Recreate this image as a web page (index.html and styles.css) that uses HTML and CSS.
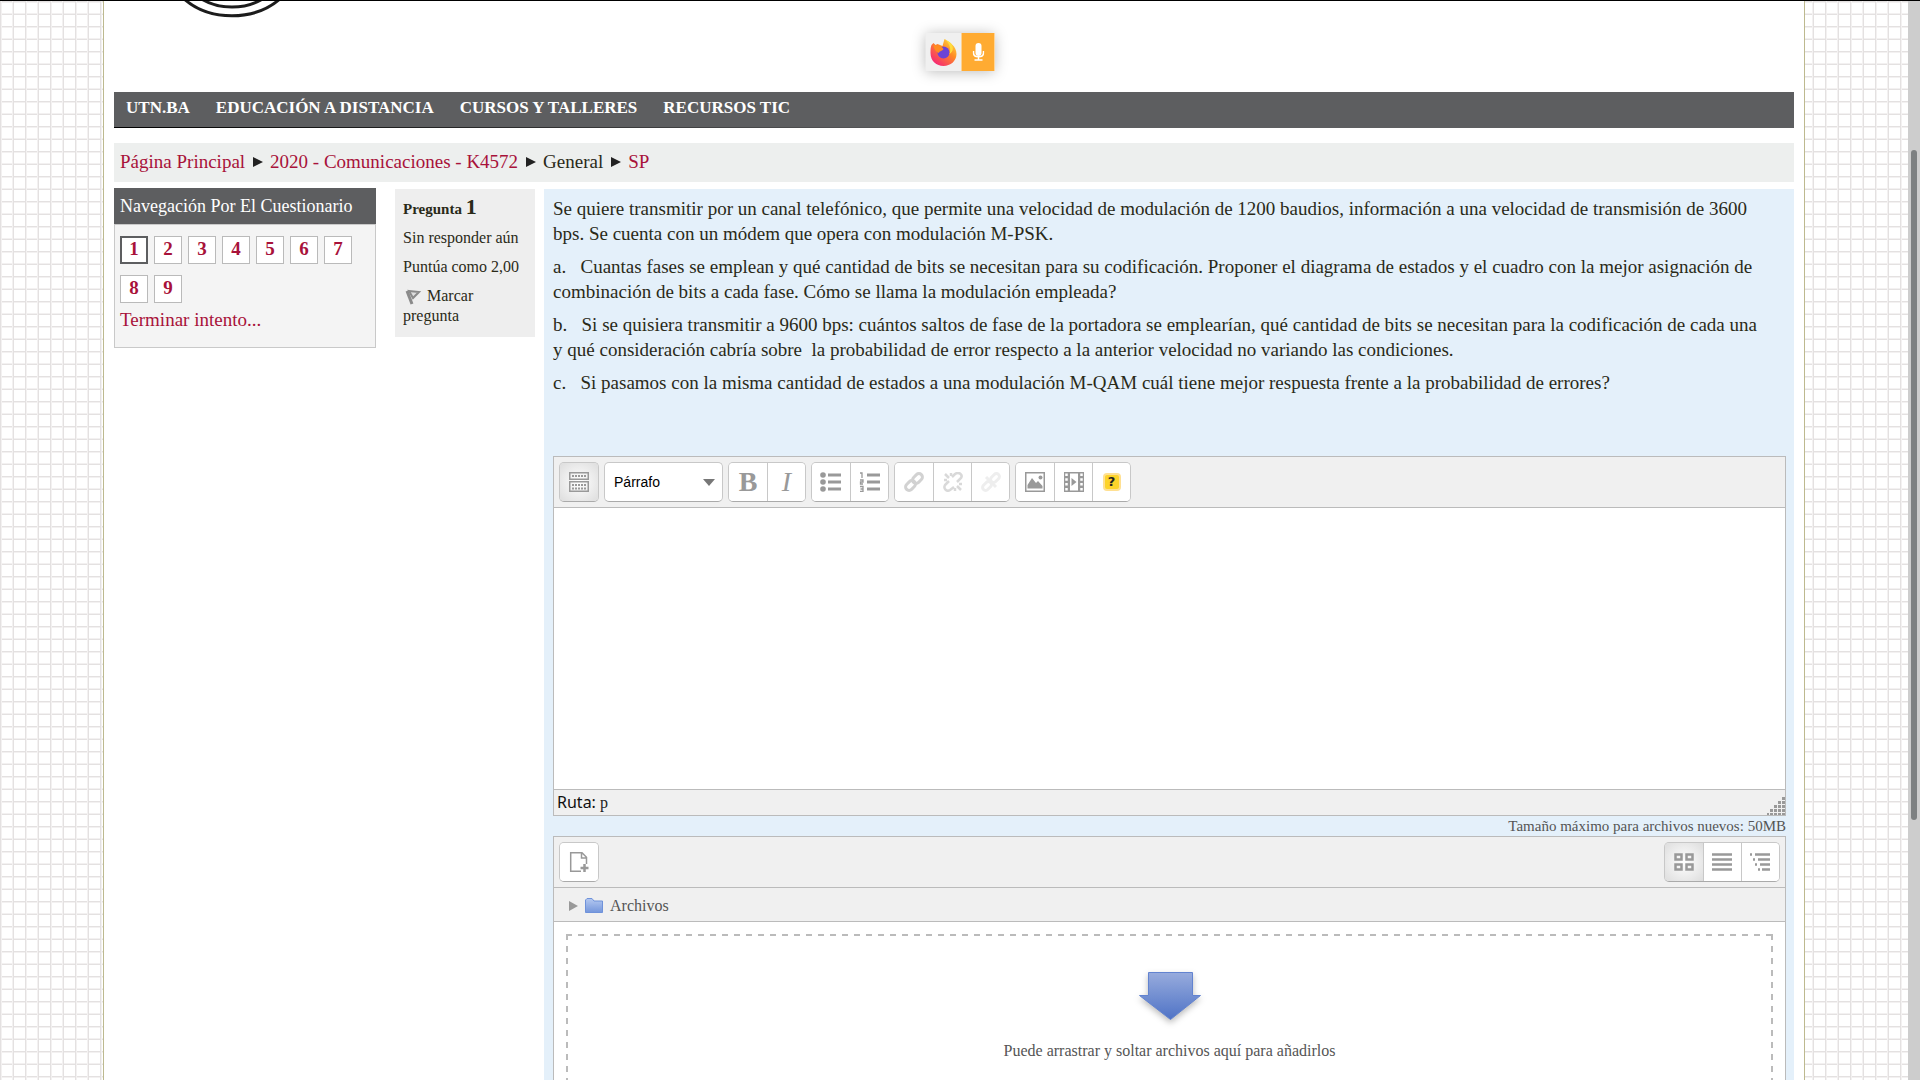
FILE: index.html
```html
<!DOCTYPE html>
<html lang="es">
<head>
<meta charset="utf-8">
<title>2020 - Comunicaciones - K4572: SP</title>
<link rel="stylesheet" href="styles.css">
</head>
<body>
<div class="window">
<div class="viewport">
<div class="page">
  <header class="masthead">
    <svg class="seal" width="116" height="18" viewBox="0 0 116 18" fill="none" stroke="#1c1c1c"><path d="M8 -4C34 21 82 21 108 -4" stroke-width="3"/><path d="M26 -3C44 9 72 9 90 -3" stroke-width="3"/></svg>
  </header>
  <nav class="menubar">
    <a href="#">UTN.BA</a><a href="#">EDUCACIÓN A DISTANCIA</a><a href="#">CURSOS Y TALLERES</a><a href="#">RECURSOS TIC</a>
  </nav>
  <nav class="breadcrumb">
    <a href="#">Página Principal</a><i class="sep"></i><a href="#">2020 - Comunicaciones - K4572</a><i class="sep"></i><span>General</span><i class="sep"></i><a href="#">SP</a>
  </nav>
  <div class="columns">
    <aside class="block">
      <h2>Navegación Por El Cuestionario</h2>
      <div class="block-body">
        <div class="numbers">
          <a class="current" href="#">1</a><a href="#">2</a><a href="#">3</a><a href="#">4</a><a href="#">5</a><a href="#">6</a><a href="#">7</a><a href="#">8</a><a href="#">9</a>
        </div>
        <a class="finish" href="#">Terminar intento...</a>
      </div>
    </aside>
    <section class="info">
      <h3>Pregunta <b>1</b></h3>
      <p>Sin responder aún</p>
      <p>Puntúa como 2,00</p>
      <p><svg class="flag" width="20" height="16" viewBox="0 0 20 16" fill="none"><path d="M4 2L9 15" stroke="#8a8a8a" stroke-width="3"/><path d="M6 2L16 3L10 9Z" fill="#ddd" stroke="#8a8a8a" stroke-width="2"/></svg> Marcar pregunta</p>
    </section>
    <main class="question">
      <div class="qtext">
        <p>Se quiere transmitir por un canal telefónico, que permite una velocidad de modulación de 1200 baudios, información a una velocidad de transmisión de 3600 bps. Se cuenta con un módem que opera con modulación M-PSK.</p>
        <p>a.&nbsp;&nbsp; Cuantas fases se emplean y qué cantidad de bits se necesitan para su codificación. Proponer el diagrama de estados y el cuadro con la mejor asignación de combinación de bits a cada fase. Cómo se llama la modulación empleada?</p>
        <p>b.&nbsp;&nbsp; Si se quisiera transmitir a 9600 bps: cuántos saltos de fase de la portadora se emplearían, qué cantidad de bits se necesitan para la codificación de cada una y qué consideración cabría sobre&nbsp; la probabilidad de error respecto a la anterior velocidad no variando las condiciones.</p>
        <p>c.&nbsp;&nbsp; Si pasamos con la misma cantidad de estados a una modulación M-QAM cuál tiene mejor respuesta frente a la probabilidad de errores?</p>
      </div>
      <div class="editor">
        <div class="toolbar">
          <div class="group">
            <button class="on" type="button" aria-label="Mostrar más botones"><svg width="20" height="20" viewBox="0 0 20 20" fill="none" stroke="#999"><path d="M.75.75h18.500v6.500H.75zM.75 9.750h18.500v9.500H.75z" stroke-width="1.500"/><path d="M3 4h14" stroke-width="2" stroke-dasharray="2 1"/><path d="M3 13h14M3 16.500h14" stroke-width="2" stroke-dasharray="2 1"/></svg></button>
          </div>
          <label class="format"><select aria-label="Formato"><option>Párrafo</option></select><svg width="12" height="7" viewBox="0 0 12 7"><path d="M0 0h12L6 7z" fill="#777"/></svg></label>
          <div class="group">
            <button class="letter" type="button"><b>B</b></button>
            <button class="letter" type="button"><em>I</em></button>
          </div>
          <div class="group">
            <button type="button" aria-label="Lista"><svg width="22" height="20" viewBox="0 0 22 20" fill="#999"><circle cx="3" cy="3" r="2.800"/><circle cx="3" cy="10" r="2.800"/><circle cx="3" cy="17" r="2.800"/><path d="M8 1.500h13v3H8zM8 8.500h13v3H8zM8 15.500h13v3H8z"/></svg></button>
            <button type="button" aria-label="Lista numerada"><svg width="22" height="20" viewBox="0 0 22 20" fill="none" stroke="#999"><path d="M8 3h13M8 10h13M8 17h13" stroke-width="3"/><path d="M1 1h2v5M1 8h3v2H1.500v2H4M1 14.500h3v5H1M1.500 17H4" stroke-width="1.300"/></svg></button>
          </div>
          <div class="group">
            <button type="button" aria-label="Enlace" disabled><svg width="20" height="20" viewBox="0 0 20 20" fill="none" stroke="#d2d2d2" stroke-width="3"><rect x="-5.500" y="-3.500" width="11" height="7" rx="3.500" transform="translate(13.500 6.500) rotate(-45)"/><rect x="-5.500" y="-3.500" width="11" height="7" rx="3.500" transform="translate(6.500 13.500) rotate(-45)"/></svg></button>
            <button type="button" aria-label="Quitar enlace" disabled><svg width="20" height="20" viewBox="0 0 20 20" fill="none" stroke="#d9d9d9" stroke-width="2.500"><path d="M9 5l3-3c4-3 8 1 6 4l-4 4M6 9l-4 4c-2 4 2 7 5 5l4-3M2 2l4 4M8 1v3M1 8h3M14 14l4 4M12 16v3M16 12h3"/></svg></button>
            <button type="button" aria-label="Evitar enlace automático" disabled><svg width="20" height="20" viewBox="0 0 20 20" fill="none" stroke="#eee" stroke-width="3"><rect x="-5" y="-3" width="10" height="6" rx="3" transform="translate(14 6) rotate(-45)"/><rect x="-5" y="-3" width="10" height="6" rx="3" transform="translate(6 14) rotate(-45)"/><path d="M5 5l10 10"/></svg></button>
          </div>
          <div class="group">
            <button type="button" aria-label="Imagen"><svg width="20" height="20" viewBox="0 0 20 20"><path d="M.75.75h18.500v18.500H.75z" fill="none" stroke="#999" stroke-width="1.500"/><path d="M2.500 16.500V13L7 6l4 5 2-2 4.500 5v2.500z" fill="#999"/><circle cx="15.500" cy="5.500" r="2" fill="#999"/></svg></button>
            <button type="button" aria-label="Multimedia"><svg width="20" height="20" viewBox="0 0 20 20"><path d="M0 0h20v20H0z" fill="#999"/><path d="M6 1.500h8v17H6z" fill="#fff"/><path d="M2.500 1.500v17M17.500 1.500v17" stroke="#fff" stroke-width="2.500" stroke-dasharray="2.500 2.300"/><path d="M7.500 6v8l5-4z" fill="#999"/></svg></button>
            <button class="help" type="button"><span>?</span></button>
          </div>
        </div>
        <textarea aria-label="Respuesta"></textarea>
        <div class="status"><span>Ruta: <a href="#">p</a></span>
          <svg width="18" height="18" viewBox="0 0 18 18" stroke="#999" stroke-width="3" stroke-dasharray="3 1"><path d="M18 1.500h-3M18 5.500h-7M18 9.500H7M18 13.500H3M18 17.500H0"/></svg>
        </div>
      </div>
      <p class="maxsize">Tamaño máximo para archivos nuevos: 50MB</p>
      <div class="files">
        <div class="toolbar">
          <div class="group">
            <button type="button" aria-label="Agregar"><svg width="20" height="20" viewBox="0 0 20 20" fill="none" stroke="#999" stroke-width="1.500"><path d="M12 19.200H1.700V.8H13l4.500 4.500V12M12.500 1v5h5"/><path d="M15.500 12v8M11.500 16h8" stroke-width="2.500"/></svg></button>
          </div>
          <div class="group views">
            <button class="on" type="button" aria-label="Iconos"><svg width="20" height="18" viewBox="0 0 20 18" fill="none" stroke="#999" stroke-width="2.500"><path d="M1.500 1.500h6v5h-6zM12.500 1.500h6v5h-6zM1.500 11.500h6v5h-6zM12.500 11.500h6v5h-6z"/></svg></button>
            <button type="button" aria-label="Lista"><svg width="20" height="18" viewBox="0 0 20 18" stroke="#999" stroke-width="2.500"><path d="M0 1.500h20M0 6.500h20M0 11.500h20M0 16.500h20"/></svg></button>
            <button type="button" aria-label="Árbol"><svg width="20" height="18" viewBox="0 0 20 18" stroke="#999" stroke-width="2.500"><path d="M0 1.500h2M5 1.500h15M3 6.500h2M8 6.500h12M5 11.500h2M10 11.500h10M8 16.500h2M12 16.500h8"/></svg></button>
          </div>
        </div>
        <div class="path">
          <svg width="9" height="10" viewBox="0 0 9 10"><path d="M0 0l9 5-9 5z" fill="#999"/></svg>
          <svg width="18" height="15" viewBox="0 0 18 15"><defs><linearGradient id="f" x2="0" y2="1"><stop stop-color="#b5c9f0"/><stop offset="1" stop-color="#7496dc"/></linearGradient></defs><path d="M.5 2L2 .5h5L9 3h8.500v11.500H.5z" fill="url(#f)" stroke="#6f92da"/></svg>
          <a href="#">Archivos</a>
        </div>
        <div class="drop">
          <svg width="72" height="60" viewBox="0 0 72 60"><defs><linearGradient id="a" x2="0" y2="1"><stop stop-color="#97abdd"/><stop offset="1" stop-color="#4f73c6"/></linearGradient></defs><path d="M14.500 4.500h44v23h8L36.500 51.500 5.500 27.500h9z" fill="url(#a)" stroke="#6283d0"/></svg>
          <p>Puede arrastrar y soltar archivos aquí para añadirlos</p>
        </div>
      </div>
    </main>
  </div>
</div>
</div>
<div class="scrollbar"><i></i></div>
</div>
<div class="sharing">
  <span class="fox"><svg width="28" height="28" viewBox="0 0 28 28"><defs><linearGradient id="x" x1="1" x2=".2" y2="1"><stop stop-color="#fff04a"/><stop offset=".45" stop-color="#ff8a24"/><stop offset="1" stop-color="#f5207c"/></linearGradient></defs><path d="M2 7l2-2 2 2 2-1 5 2 2-7c5 3 12 7 12 15C27 23 21 28 14 28S1 23 1 15C1 12 1 9 2 7z" fill="url(#x)"/><circle cx="14" cy="14.500" r="6" fill="#6c44d6"/><path d="M4 7c4 0 8 1 10 4-1 2-4 2-5 4-2-1-5-4-5-8z" fill="#ff8b20"/><path d="M15 1c5 4 7 10 5 15 4-2 5-8 0-12z" fill="#ffdc3d"/></svg></span>
  <span class="mic"><svg width="12" height="18" viewBox="0 0 12 18"><rect x="3" width="6" height="13" rx="3" fill="#fff"/><path d="M1 8v2c0 5 10 5 10 0V8M6 13v4M2 17h8" fill="none" stroke="#fff" stroke-width="1.500"/></svg></span>
</div>
</body>
</html>
```
FILE: styles.css
```css
* { box-sizing: border-box; }
body {
  margin: 0;
  color: #2a2a18;
  font: 19px/25px "Liberation Serif", serif;
}
h2, h3, p { margin: 0; }
a { color: #a8123a; text-decoration: none; }
svg { flex: none; }

.window {
  display: grid;
  grid-template-columns: 1fr 12px;
  height: 100vh;
  overflow: hidden;
  border-top: 1px solid #000;
}
.viewport {
  min-width: 0;
  overflow: hidden;
  background:
    linear-gradient(90deg, #e4e1e1 1px, #f3f1f1 1px 2px, transparent 2px 12px, #f3f1f1 12px 13px, #e4e1e1 13px 14px, transparent 14px) 0 0 / 25px 25px,
    linear-gradient(#e4e1e1 1px, #f3f1f1 1px 2px, transparent 2px 12px, #f3f1f1 12px 13px, #e4e1e1 13px 14px, transparent 14px) 0 0 / 25px 25px,
    #fff;
}
.scrollbar { background: #cdcdcd; padding: 149px 3px 0; }
.scrollbar i { display: block; height: 62vh; border-radius: 3px; background: #7e8182; }

.page {
  min-height: 100%;
  margin: 0 5.4%;
  padding: 0 10px;
  border: solid #bdb98f;
  border-width: 0 1px;
  background: #fff;
}
.masthead { height: 91px; padding-left: 60px; }
.seal { display: block; }

.menubar {
  display: flex;
  gap: 26px;
  height: 36px;
  padding: 0 12px;
  background: linear-gradient(90deg, #000, #5d5e60 50%) bottom / 100% 1px no-repeat, #5d5e60;
  font-size: 17px;
  font-weight: bold;
  line-height: 32px;
}
.menubar a { color: #fff; }
.breadcrumb {
  display: flex;
  align-items: center;
  margin: 15px 0 6px;
  padding: 6px 6px 8px;
  background: #edefee;
}
.sep {
  width: 10px;
  margin: 0 7px 0 8px;
  border: solid transparent;
  border-width: 5px 0 5px 10px;
  border-left-color: #222;
}

.columns { display: flex; align-items: flex-start; }
.block { flex: none; width: 262px; margin-right: 19px; }
.block h2 {
  padding-left: 6px;
  background: #5d5e60;
  color: #fff;
  font-size: 18px;
  font-weight: normal;
  line-height: 36px;
}
.block-body {
  padding: 11px 5px 15px;
  border: 1px solid #c9c9c9;
  background: #f4f4f4;
}
.numbers { display: flex; flex-wrap: wrap; gap: 11px 6px; margin-bottom: 4px; }
.numbers a {
  width: 28px;
  height: 28px;
  border: 1px solid #bababa;
  background: #fff;
  font-weight: bold;
  line-height: 24px;
  text-align: center;
}
.numbers .current { border: 2px solid #5d5e60; line-height: 22px; }
.finish { display: block; }

.info {
  flex: none;
  width: 140px;
  margin: 1px 9px 0 0;
  padding: 8px 8px 11px;
  background: #eee;
  font-size: 16px;
  line-height: 20px;
}
.info h3 { font-size: 15px; line-height: 20px; }
.info b { font-size: 22px; }
.info p { margin-top: 9px; }
.flag { vertical-align: -4px; }

.question {
  flex: 1;
  min-width: 0;
  margin-top: 1px;
  padding: 7px 8px 7px 9px;
  background: #e4f0fa;
}
.qtext { display: grid; gap: 8px; padding-right: 16px; margin-bottom: 61px; }

.editor, .files { border: 1px solid #bbb; background: #fff; }
.toolbar {
  display: flex;
  gap: 5px;
  padding: 5px;
  border-bottom: 1px solid #bbb;
  background: #f0f0f0;
}
.group {
  display: flex;
  overflow: hidden;
  border: 1px solid #c8c8c8;
  border-bottom-color: #aaa;
  border-radius: 5px;
}
.views { margin-left: auto; }
button {
  display: flex;
  align-items: center;
  justify-content: center;
  width: 38px;
  height: 38px;
  padding: 0;
  border: 0;
  background: #fff;
  color: #999;
}
button + button { border-left: 1px solid #c8c8c8; }
button.on { background: radial-gradient(#fff, #ddd); }
.letter { font: 28px/38px "Liberation Serif", serif; }
.help span {
  width: 18px;
  border: 2px solid #ffe092;
  border-radius: 4px;
  background: #fdd32a;
  color: #222;
  font: bold 13px/14px "DejaVu Sans", sans-serif;
}
.format { position: relative; width: 119px; }
.format select {
  width: 100%;
  height: 40px;
  padding: 0 9px;
  appearance: none;
  border: 1px solid #c8c8c8;
  border-bottom-color: #aaa;
  border-radius: 5px;
  background: #fff;
  color: #000;
  font: 14px "Liberation Sans", sans-serif;
}
.format svg { position: absolute; right: 8px; top: 17px; }
textarea {
  display: block;
  width: 100%;
  height: 281px;
  border: 0;
  resize: none;
}
.status {
  display: flex;
  align-items: flex-end;
  justify-content: space-between;
  padding-left: 3px;
  border-top: 1px solid #bbb;
  background: #f0f0f0;
  color: #111;
  font: 16px/25px "Noto Sans", sans-serif;
}
.status a { color: #222; font-family: "Liberation Serif", serif; }
.maxsize { color: #555; font-size: 15px; line-height: 20px; text-align: right; }
.path {
  display: flex;
  align-items: center;
  gap: 7px;
  height: 34px;
  padding: 2px 0 0 15px;
  border-bottom: 1px solid #bbb;
  background: #f0f0f0;
}
.path a { color: #555; font-size: 16px; }
.drop {
  --h: repeating-linear-gradient(90deg, #bbb 0 6px, transparent 6px 12px);
  --v: repeating-linear-gradient(#bbb 0 6px, transparent 6px 12px);
  display: flex;
  flex-direction: column;
  align-items: center;
  gap: 10px;
  height: 300px;
  margin: 12px;
  padding-top: 34px;
  background:
    var(--h) top / 100% 2px no-repeat,
    var(--h) bottom / 100% 2px no-repeat,
    var(--v) left / 2px 100% no-repeat,
    var(--v) right / 2px 100% no-repeat;
  color: #555;
  font-size: 16px;
}
.drop svg { filter: drop-shadow(0 3px 3px #0004); }

.sharing {
  position: fixed;
  top: 33px;
  left: 50%;
  display: flex;
  height: 38px;
  transform: translateX(-50%);
  box-shadow: 0 1px 14px #0004;
}
.sharing span { display: grid; place-items: center; }
.fox { width: 36px; background: #f0f0f0; }
.mic { width: 33px; background: #ffab32; }
```
